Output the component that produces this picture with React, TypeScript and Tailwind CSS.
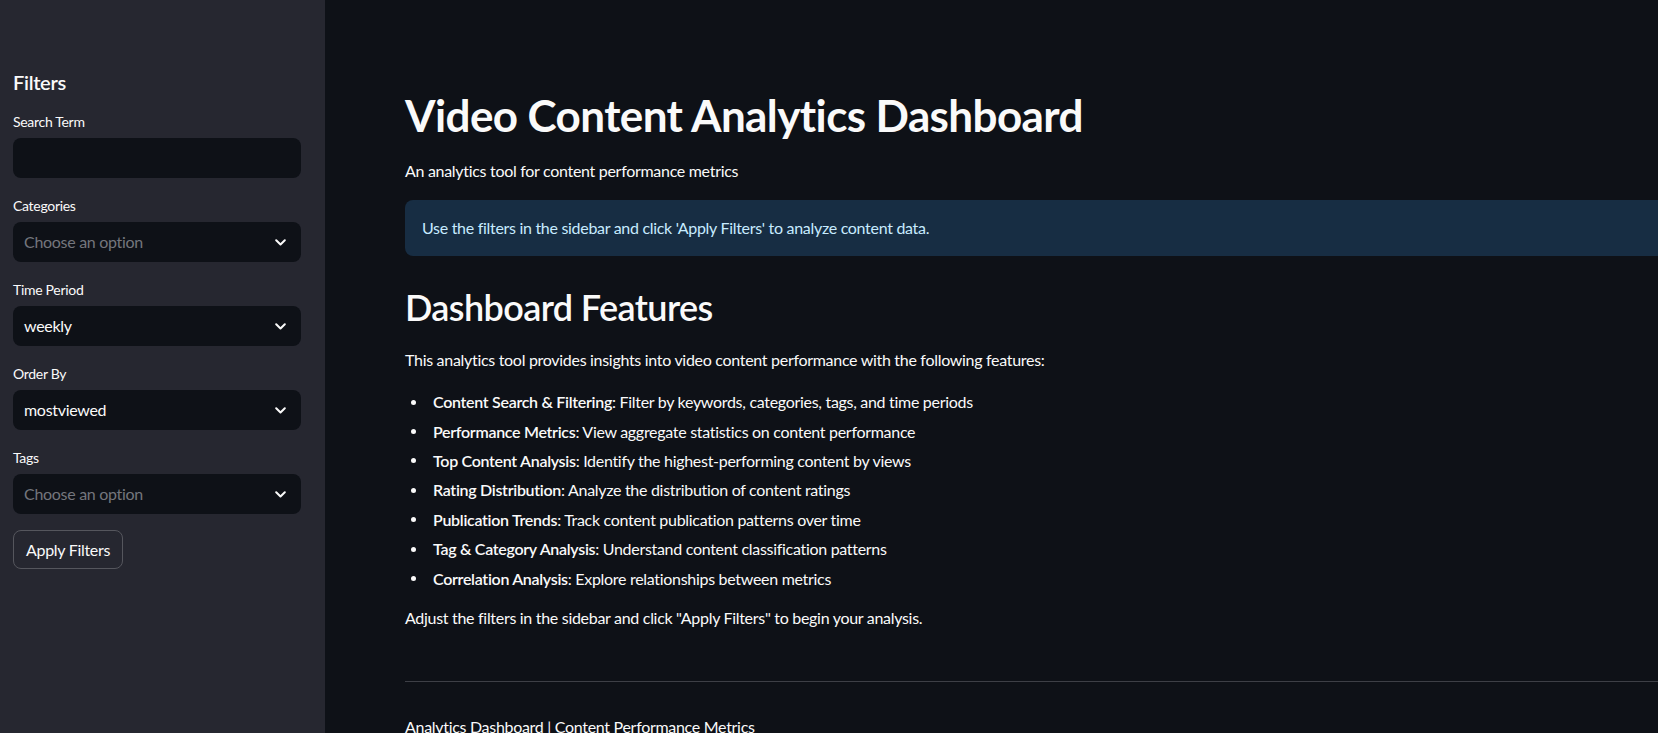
import React from "react";

const features = [
  { title: "Content Search & Filtering", text: "Filter by keywords, categories, tags, and time periods" },
  { title: "Performance Metrics", text: "View aggregate statistics on content performance" },
  { title: "Top Content Analysis", text: "Identify the highest-performing content by views" },
  { title: "Rating Distribution", text: "Analyze the distribution of content ratings" },
  { title: "Publication Trends", text: "Track content publication patterns over time" },
  { title: "Tag & Category Analysis", text: "Understand content classification patterns" },
  { title: "Correlation Analysis", text: "Explore relationships between metrics" },
];

function Chevron() {
  return (
    <svg width="11" height="7" viewBox="0 0 11 7" fill="none">
      <polyline points="1.2,1.2 5.5,5.5 9.8,1.2" stroke="#fafafa" strokeWidth="2" strokeLinecap="round" strokeLinejoin="round" />
    </svg>
  );
}

function Field({ label, value, placeholder, select }: { label: string; value?: string; placeholder?: string; select?: boolean }) {
  return (
    <div>
      <label className="block text-[14px] leading-[21px] mb-[6px]">{label}</label>
      <div className="flex h-[40px] w-[288px] items-center justify-between rounded-lg bg-[#0e1117] pl-[11px] pr-[15px]">
        <span className={value ? "text-[16px] text-[#fafafa]" : "text-[16px] text-[#74767d]"}>{value || placeholder}</span>
        {select && <Chevron />}
      </div>
    </div>
  );
}

export default function App() {
  return (
    <div className="flex h-[733px] w-full overflow-hidden bg-[#0e1117] font-['Lato',sans-serif] tracking-[-0.3px] text-[#fafafa]">
      <aside className="w-[325px] shrink-0 bg-[#262730] pl-[13px] pt-[70px]">
        <h2 className="text-[20px] leading-[24px] font-semibold">Filters</h2>
        <div className="mt-[17px] flex flex-col gap-[17px]">
          <Field label="Search Term" />
          <Field label="Categories" placeholder="Choose an option" select />
          <Field label="Time Period" value="weekly" select />
          <Field label="Order By" value="mostviewed" select />
          <Field label="Tags" placeholder="Choose an option" select />
        </div>
        <button className="mt-[16px] h-[39px] rounded-lg border border-[#55565d] px-[12px] text-[16px] text-[#fafafa]">
          Apply Filters
        </button>
      </aside>

      <main className="min-w-0 flex-1 overflow-hidden">
        <div className="w-[1500px] pl-[80px] pt-[89px]">
          <h1 className="text-[44px] leading-[52.8px] font-bold tracking-[-0.6px]">Video Content Analytics Dashboard</h1>
          <p className="mt-[16px] text-[16px] leading-[25.6px]">An analytics tool for content performance metrics</p>

          <div className="mt-[16.6px] rounded-lg bg-[#172d43] px-[17px] py-[15px] text-[16px] leading-[26px] text-[#c7ebff]">
            Use the filters in the sidebar and click 'Apply Filters' to analyze content data.
          </div>

          <h2 className="mt-[30.5px] text-[36px] leading-[43.2px] font-semibold tracking-[-0.6px]">Dashboard Features</h2>
          <p className="mt-[17px] text-[16px] leading-[25.6px]">
            This analytics tool provides insights into video content performance with the following features:
          </p>

          <ul className="mt-[17px]">
            {features.map((f) => (
              <li key={f.title} className="mb-[3.8px] flex items-center text-[16px] leading-[25.6px]">
                <span className="ml-[6px] mr-[17px] h-[5px] w-[5px] rounded-full bg-[#fafafa]" />
                <span>
                  <strong className="font-semibold">{f.title}</strong>: {f.text}
                </span>
              </li>
            ))}
          </ul>

          <p className="mt-[14px] text-[16px] leading-[25.6px]">
            Adjust the filters in the sidebar and click "Apply Filters" to begin your analysis.
          </p>

          <hr className="mt-[50px] border-0 border-t border-[#3d3f46]" />

          <p className="mt-[32px] text-[16px] leading-[25.6px]">Analytics Dashboard | Content Performance Metrics</p>
        </div>
      </main>
    </div>
  );
}
